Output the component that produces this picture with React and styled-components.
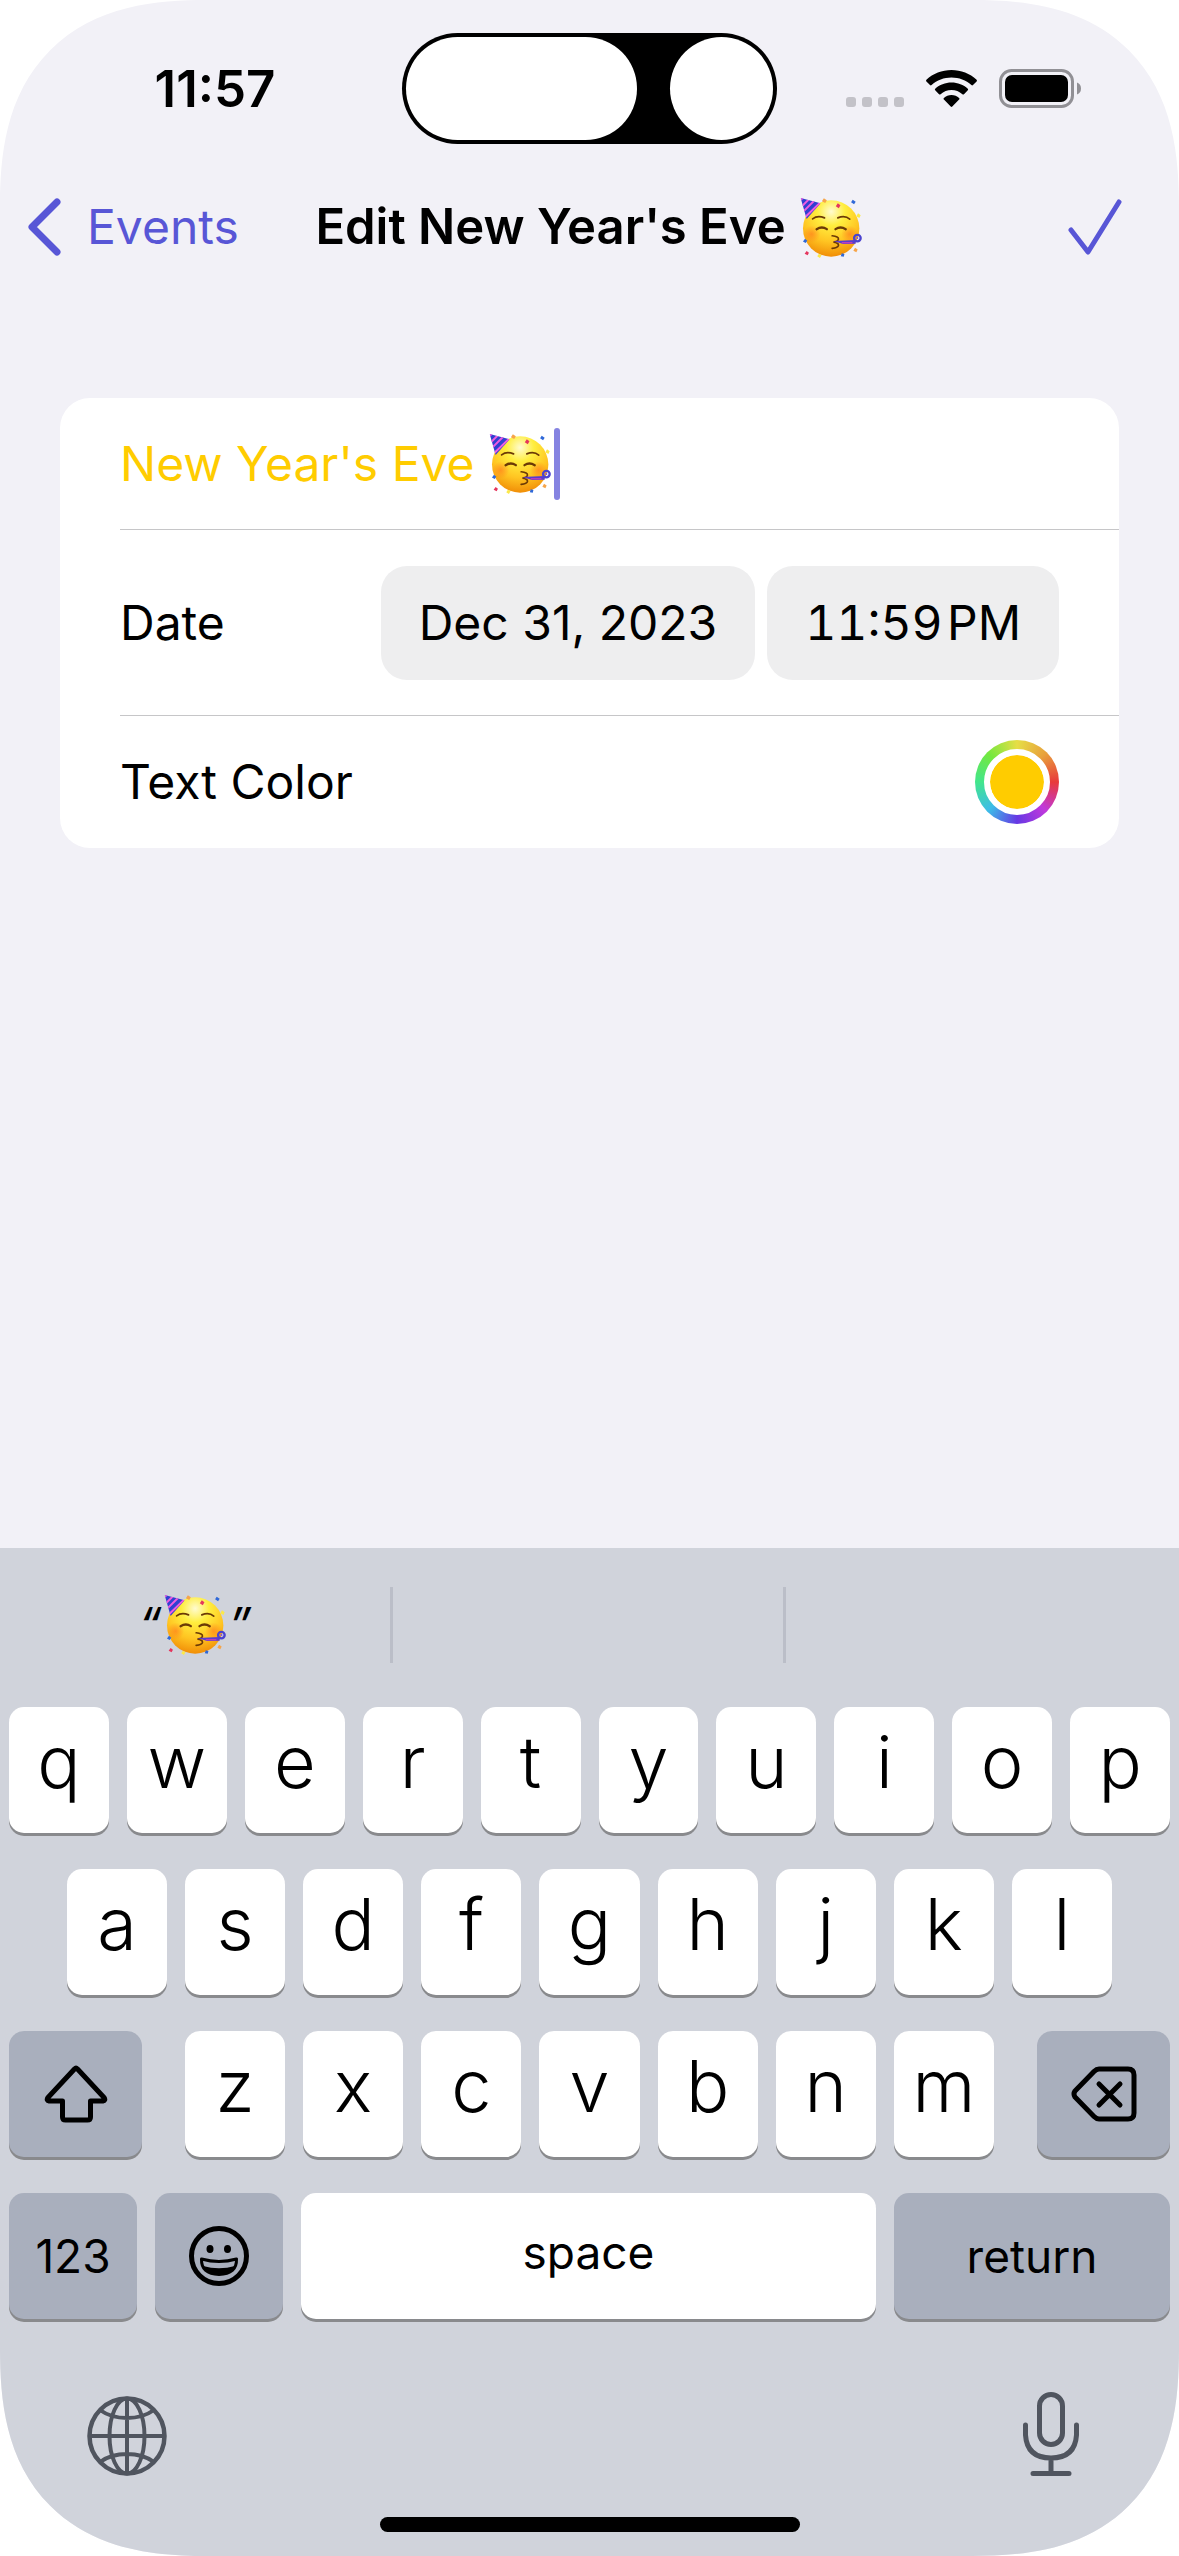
import React, { useState } from "react";
import styled, { createGlobalStyle } from "styled-components";

const GlobalStyle = createGlobalStyle`
  *, *::before, *::after { box-sizing: border-box; }
  body { margin: 0; background: #ffffff; }
  button, input { font: inherit; color: inherit; }
  button { margin: 0; padding: 0; border: 0; background: none; cursor: pointer; }
  svg { display: block; flex: none; }
`;

const tint = "#5856d6";

const Screen = styled.div`
  display: flex;
  flex-direction: column;
  min-height: 100vh;
  overflow: hidden;
  border-radius: 172px;
  background: #f2f1f7;
  color: #000000;
  font-family: Inter, "Liberation Sans", sans-serif;
  font-size: 48px;
  line-height: 60px;

  @supports (corner-shape: superellipse(1.32)) {
    border-radius: 207px;
    corner-shape: superellipse(1.32);
  }
`;

const StatusBar = styled.div`
  display: grid;
  grid-template-columns: 1fr auto 1fr;
  align-items: center;
  padding-top: 33px;
`;

const Clock = styled.time`
  padding-left: 28px;
  text-align: center;
  font-size: 51px;
  font-weight: 600;
`;

const Island = styled.div`
  display: flex;
  justify-content: space-between;
  width: 375px;
  height: 111px;
  padding: 4px;
  border-radius: 56px;
  background: #000000;
`;

const Cutout = styled.span`
  width: ${(p) => p.$width}px;
  border-radius: 52px;
  background: #ffffff;
`;

const StatusIcons = styled.div`
  display: flex;
  justify-content: flex-end;
  align-items: center;
  gap: 22px;
  padding-right: 98px;
`;

const NavBar = styled.header`
  display: grid;
  grid-template-columns: 1fr auto 1fr;
  align-items: center;
  height: 166px;
  padding: 0 57px 0 28px;
`;

const BackLink = styled.a`
  display: flex;
  align-items: center;
  gap: 26px;
  color: ${tint};
  text-decoration: none;
`;

const Title = styled.h1`
  display: flex;
  align-items: center;
  gap: 14px;
  margin: 0;
  padding-left: 28px;
  font-size: 49px;
  font-weight: 600;
  white-space: nowrap;
`;

const DoneButton = styled.button`
  justify-self: end;
  color: ${tint};
`;

const Content = styled.main`
  flex: 1;
  padding: 88px 60px 0;
`;

const Card = styled.form`
  border-radius: 30px;
  background: #ffffff;
  padding-left: 60px;
`;

const Row = styled.div`
  display: flex;
  align-items: center;
  justify-content: ${(p) => (p.$spread ? "space-between" : "flex-start")};
  height: ${(p) => (p.$tall ? 186 : 132)}px;
  padding-right: 60px;
  border-bottom: 1px solid #c6c6c8;

  &:last-child { border-bottom: 0; }
`;

const NameInput = styled.input`
  field-sizing: content;
  margin: 0 14px 0 0;
  padding: 0;
  border: 0;
  outline: 0;
  background: transparent;
  color: #ffcc00;
`;

const Caret = styled.span`
  width: 6px;
  height: 72px;
  margin-left: 2px;
  border-radius: 3px;
  background: #8583e1;
`;

const Pickers = styled.div`
  display: flex;
  gap: 12px;
`;

const PickerButton = styled.button`
  height: 114px;
  padding: 0 38px;
  border-radius: 26px;
  background: #eeeeef;
  white-space: nowrap;
  font-variant-numeric: ${(p) => (p.$tabular ? "tabular-nums" : "normal")};
`;

const ColorRing = styled.span`
  display: flex;
  align-items: center;
  justify-content: center;
  width: 84px;
  height: 84px;
  border-radius: 50%;
  background: conic-gradient(
    #e6de46, #e8a03c 45deg, #e83a3a 90deg, #c038dc 135deg,
    #6638e4 180deg, #3cbce8 225deg, #42e68c 270deg, #74e83e 315deg, #e6de46
  );
`;

const ColorInput = styled.input`
  appearance: none;
  width: 66px;
  height: 66px;
  padding: 0;
  border: 6px solid #ffffff;
  border-radius: 50%;
  background: #ffffff;
  overflow: hidden;

  &::-webkit-color-swatch-wrapper { padding: 0; }
  &::-webkit-color-swatch { border: 0; border-radius: 50%; }
`;

const Keyboard = styled.section`
  background: #d0d3db;
`;

const Suggestions = styled.div`
  display: grid;
  grid-template-columns: repeat(3, 1fr);
  align-items: center;
  height: 153px;
`;

const Suggestion = styled.button`
  display: flex;
  align-items: center;
  justify-content: center;
  gap: 2px;
  height: 76px;
  border-right: 3px solid #bbbec8;
  font-style: italic;

  &:last-child { border-right: 0; }
`;

const KeyRows = styled.div`
  display: flex;
  flex-direction: column;
  gap: 36px;
  padding: 6px 9px 0;
`;

const KeyRow = styled.div`
  display: flex;
  gap: 18px;
  padding: 0 ${(p) => (p.$inset ? 58 : 0)}px;
`;

const KeyGroup = styled.div`
  display: flex;
  flex: 1;
  gap: 18px;
  margin: 0 25px;
`;

const Key = styled.button`
  display: flex;
  align-items: center;
  justify-content: center;
  flex: ${(p) => (p.$width ? `0 0 ${p.$width}px` : "1 1 0")};
  min-width: 0;
  height: 126px;
  border-radius: 15px;
  background: ${(p) => (p.$dark ? "#a9afbd" : "#ffffff")};
  box-shadow: 0 3px 0 #898a8d;
  font-size: 46px;
`;

const LetterKey = styled(Key)`
  padding-bottom: 16px;
  font-size: 72px;
  font-weight: 350;
  line-height: 84px;
`;

const SpaceKey = styled(Key)`
  padding-bottom: 8px;
`;

const KeyboardFooter = styled.div`
  display: flex;
  align-items: flex-end;
  justify-content: space-between;
  height: 157px;
  padding: 0 100px 0 87px;
  color: #50555f;
`;

const HomeIndicator = styled.div`
  width: 420px;
  height: 15px;
  margin: 41px auto 24px;
  border-radius: 8px;
  background: #000000;
`;

function PartyFace() {
  return (
    <svg width="63" height="61" viewBox="0 0 190 184" role="img" aria-label="partying face">
      <defs>
        <radialGradient id="face" cx="0.5" cy="0.2" r="0.82">
          <stop offset="0" stopColor="#fffbd0" />
          <stop offset="0.3" stopColor="#ffee3f" />
          <stop offset="0.65" stopColor="#ffc522" />
          <stop offset="1" stopColor="#f08a05" />
        </radialGradient>
        <radialGradient id="blush">
          <stop offset="0" stopColor="#ff7a1c" stopOpacity="0.65" />
          <stop offset="1" stopColor="#ff7a1c" stopOpacity="0" />
        </radialGradient>
        <clipPath id="hat">
          <path d="M2 3 L62 19 L20 66 Z" />
        </clipPath>
      </defs>
      <circle cx="94" cy="95" r="85" fill="url(#face)" />
      <circle cx="35" cy="112" r="26" fill="url(#blush)" />
      <circle cx="150" cy="112" r="26" fill="url(#blush)" />
      <g clipPath="url(#hat)">
        <rect width="70" height="70" fill="#3140d0" />
        <path d="M-4 14 L16 -4 M2 32 L32 2 M6 48 L48 6 M12 64 L66 12" stroke="#ef5ce0" strokeWidth="6" />
      </g>
      <g fill="none" stroke="#6b3a06" strokeWidth="5" strokeLinecap="round">
        <path d="M38 66 Q53 54 74 63" />
        <path d="M114 63 Q136 54 150 67" />
        <path d="M50 97 Q66 87 81 97" strokeWidth="7" />
        <path d="M107 97 Q122 87 138 97" strokeWidth="7" />
        <path d="M97 117 Q117 119 116 127 Q115 134 101 136 Q117 138 116 146 Q114 153 97 155" />
      </g>
      <path d="M101 133 L168 130 L168 141 L130 142 Z" fill="#5a3bd0" />
      <path d="M126 138 H158" stroke="#c13fb8" strokeWidth="4" />
      <circle cx="173" cy="124" r="10" fill="none" stroke="#4b43cf" strokeWidth="7" />
      <circle cx="173" cy="124" r="3" fill="#7c4be0" />
      <path d="M114 19l8 6-5 9-9-6z M20 163l7 5-4 8-9-5z" fill="#e5365e" />
      <path d="M159 8l9 6-5 8-9-6z M15 126l7 6-5 7-8-5z M126 170l8 2-2 8-9-1z" fill="#2f68d8" />
      <path d="M72 4l9 6-5 8-10-5z M166 153l8 5-4 9-9-5z" fill="#f6a54a" />
      <path d="M175 49l8 6-4 8-9-5z M57 171l8 5-5 8-8-5z" fill="#fbe94a" />
    </svg>
  );
}

function CellularDots() {
  return (
    <svg width="58" height="37" viewBox="0 0 58 37" fill="#c3c2c8" aria-hidden="true">
      {[0, 16, 32, 48].map((x) => (
        <rect key={x} x={x} y="27" width="10" height="10" rx="3" />
      ))}
    </svg>
  );
}

function Wifi() {
  return (
    <svg width="51" height="37" viewBox="0 0 51 37" aria-hidden="true">
      <path d="M25.500 0C35 0 44 3.500 50.600 9.800q.7.800 0 1.600l-3.600 3.700q-.8.700-1.600 0C40 10.200 33 7.500 25.500 7.500S11 10.200 5.600 15.100q-.8.700-1.600 0L.4 11.400q-.7-.8 0-1.600C7 3.500 16 0 25.500 0z" />
      <path d="M25.500 12.500c6.200 0 12 2.300 16.300 6.200q.8.800 0 1.600l-3.800 3.900q-.8.700-1.600 0C33.400 21.600 29.600 20 25.500 20s-7.900 1.600-10.900 4.200q-.8.700-1.600 0l-3.800-3.900q-.8-.8 0-1.600c4.300-3.900 10.100-6.200 16.300-6.200z" />
      <path d="M25.500 25c2.900 0 5.600 1.100 7.600 2.900q.8.800 0 1.600l-6.800 7q-.8.800-1.600 0l-6.800-7q-.8-.8 0-1.600c2-1.800 4.700-2.900 7.600-2.900z" />
    </svg>
  );
}

function Battery() {
  return (
    <svg width="82" height="39" viewBox="0 0 82 39" aria-hidden="true">
      <rect x="1.500" y="1.500" width="72" height="36" rx="11" fill="none" stroke="#919095" strokeWidth="3" />
      <rect x="6" y="6" width="63" height="27" rx="7" />
      <path d="M78 13.500q4 1.500 4 6t-4 6z" fill="#919095" />
    </svg>
  );
}

function Chevron() {
  return (
    <svg width="33" height="58" viewBox="0 0 33 58" fill="none" stroke="currentColor" strokeWidth="7" strokeLinecap="round" strokeLinejoin="round" aria-hidden="true">
      <path d="M29 4 L4 29 L29 54" />
    </svg>
  );
}

function Check() {
  return (
    <svg width="54" height="56" viewBox="0 0 54 56" fill="none" stroke="currentColor" strokeWidth="5" strokeLinecap="round" strokeLinejoin="round" aria-hidden="true">
      <path d="M3 31 L20 53 L51 3" />
    </svg>
  );
}

function Shift() {
  return (
    <svg width="64" height="58" viewBox="0 0 64 58" fill="none" stroke="#000" strokeWidth="5" strokeLinejoin="round" aria-hidden="true">
      <path d="M30.500 4 Q32 2.500 33.500 4 L60 32.500 Q62 35.500 59 36 H46.500 V52 Q46.500 55 43.500 55 H21.500 Q18.500 55 18.500 52 V36 H5 Q2 35.500 4 32.500 Z" />
    </svg>
  );
}

function Backspace() {
  return (
    <svg width="66" height="56" viewBox="0 0 66 56" fill="none" stroke="#000" strokeWidth="5" strokeLinecap="round" strokeLinejoin="round" aria-hidden="true">
      <path d="M28 3 H57 Q63 3 63 9 V47 Q63 53 57 53 H28 Q25.500 53 23 50.500 L4 31 Q2 28 4 25 L23 5.500 Q25.500 3 28 3 Z" />
      <path d="M28 18 L49 39 M49 18 L28 39" />
    </svg>
  );
}

function Smiley() {
  return (
    <svg width="60" height="60" viewBox="0 0 60 60" aria-hidden="true">
      <circle cx="30" cy="30" r="27.500" fill="none" stroke="#000" strokeWidth="5" />
      <ellipse cx="21" cy="23" rx="3.500" ry="4" />
      <ellipse cx="38.500" cy="23" rx="3.500" ry="4" />
      <path d="M12.500 33 Q30 38 47.500 33 Q48 48 30 48.500 Q12 48 12.500 33 Z" fill="none" stroke="#000" strokeWidth="3" strokeLinejoin="round" />
      <path d="M14 40 Q30 44.500 46 40 Q42 49 30 49 Q18 49 14 40 Z" />
    </svg>
  );
}

function Globe() {
  return (
    <svg width="80" height="80" viewBox="0 0 80 80" fill="none" stroke="currentColor" strokeWidth="4" aria-hidden="true">
      <circle cx="40" cy="40" r="37.500" strokeWidth="4.500" />
      <ellipse cx="40" cy="40" rx="17.500" ry="37.500" />
      <path d="M40 2 V78 M2 40 H78 M13 14 Q24 22 40 22 T67 14 M13 66 Q24 58 40 58 T67 66" />
    </svg>
  );
}

function Mic() {
  return (
    <svg width="56" height="84" viewBox="0 0 56 84" fill="none" stroke="currentColor" strokeWidth="5" strokeLinecap="round" aria-hidden="true">
      <rect x="16.500" y="2.500" width="23" height="50" rx="11.500" />
      <path d="M2.500 33 V43 Q4 66 28 66 Q52 66 53.500 43 V33 M28 66 V81 M10 81.500 H46" />
    </svg>
  );
}

const letters = (row) =>
  row.split("").map((letter) => (
    <LetterKey key={letter} type="button">
      {letter}
    </LetterKey>
  ));

export default function App() {
  const [name, setName] = useState("New Year's Eve");
  const [color, setColor] = useState("#ffcc00");

  return (
    <>
      <GlobalStyle />
      <Screen>
        <StatusBar>
          <Clock>11:57</Clock>
          <Island>
            <Cutout $width={231} />
            <Cutout $width={103} />
          </Island>
          <StatusIcons>
            <CellularDots />
            <Wifi />
            <Battery />
          </StatusIcons>
        </StatusBar>

        <NavBar>
          <BackLink href="#events">
            <Chevron />
            Events
          </BackLink>
          <Title>
            Edit New Year's Eve
            <PartyFace />
          </Title>
          <DoneButton type="button" aria-label="Done">
            <Check />
          </DoneButton>
        </NavBar>

        <Content>
          <Card>
            <Row>
              <NameInput aria-label="Event name" value={name} onChange={(e) => setName(e.target.value)} />
              <PartyFace />
              <Caret />
            </Row>
            <Row $tall $spread>
              <span id="date-label">Date</span>
              <Pickers role="group" aria-labelledby="date-label">
                <PickerButton type="button">Dec 31, 2023</PickerButton>
                <PickerButton type="button" $tabular>
                  11:59{"\u200A"}PM
                </PickerButton>
              </Pickers>
            </Row>
            <Row $spread>
              <label htmlFor="text-color">Text Color</label>
              <ColorRing>
                <ColorInput id="text-color" type="color" value={color} onChange={(e) => setColor(e.target.value)} />
              </ColorRing>
            </Row>
          </Card>
        </Content>

        <Keyboard aria-label="Keyboard">
          <Suggestions>
            <Suggestion type="button">
              “<PartyFace />”
            </Suggestion>
            <Suggestion type="button" aria-label="Empty suggestion" />
            <Suggestion type="button" aria-label="Empty suggestion" />
          </Suggestions>
          <KeyRows>
            <KeyRow>{letters("qwertyuiop")}</KeyRow>
            <KeyRow $inset>{letters("asdfghjkl")}</KeyRow>
            <KeyRow>
              <Key type="button" $dark $width={133} aria-label="Shift">
                <Shift />
              </Key>
              <KeyGroup>{letters("zxcvbnm")}</KeyGroup>
              <Key type="button" $dark $width={133} aria-label="Delete">
                <Backspace />
              </Key>
            </KeyRow>
            <KeyRow>
              <Key type="button" $dark $width={128}>123</Key>
              <Key type="button" $dark $width={128} aria-label="Emoji">
                <Smiley />
              </Key>
              <SpaceKey type="button">space</SpaceKey>
              <Key type="button" $dark $width={276}>return</Key>
            </KeyRow>
          </KeyRows>
          <KeyboardFooter>
            <button type="button" aria-label="Next keyboard">
              <Globe />
            </button>
            <button type="button" aria-label="Dictate">
              <Mic />
            </button>
          </KeyboardFooter>
          <HomeIndicator />
        </Keyboard>
      </Screen>
    </>
  );
}
